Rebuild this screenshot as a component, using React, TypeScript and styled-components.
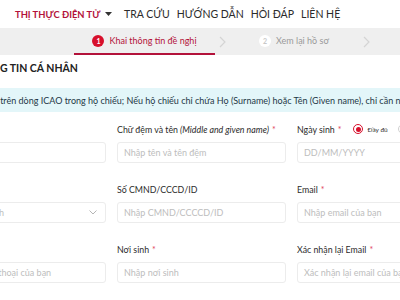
import styled, { createGlobalStyle } from "styled-components";

const GlobalStyle = createGlobalStyle`
  html, body {
    margin: 0;
    padding: 0;
    overflow: hidden;
    background: #ffffff;
    font-family: "Lato", "Noto Sans", sans-serif;
  }
`;

const RED = "#b3123a";

const navItems = ["TRA CỨU", "HƯỚNG DẪN", "HỎI ĐÁP", "LIÊN HỆ"];

type Field = {
  label: string;
  italic?: string;
  required?: boolean;
  placeholder: string;
  select?: boolean;
  radio?: boolean;
};

const rows: Field[][] = [
  [
    { label: "Họ", italic: "(Surname)", required: true, placeholder: "Nhập họ" },
    { label: "Chữ đệm và tên", italic: "(Middle and given name)", required: true, placeholder: "Nhập tên và tên đệm" },
    { label: "Ngày sinh", required: true, placeholder: "DD/MM/YYYY", radio: true },
  ],
  [
    { label: "Quốc tịch", required: true, placeholder: "Chọn quốc tịch", select: true },
    { label: "Số CMND/CCCD/ID", placeholder: "Nhập CMND/CCCCD/ID" },
    { label: "Email", required: true, placeholder: "Nhập email của bạn" },
  ],
  [
    { label: "Số điện thoại", required: true, placeholder: "Nhập số điện thoại của bạn" },
    { label: "Nơi sinh", required: true, placeholder: "Nhập nơi sinh" },
    { label: "Xác nhận lại Email", required: true, placeholder: "Xác nhận lại email của bạn" },
  ],
];

export default function App() {
  return (
    <Page>
      <GlobalStyle />
      <Header>
        <Brand>
          THỊ THỰC ĐIỆN TỬ
          <Caret />
        </Brand>
        {navItems.map((item) => (
          <NavLink key={item}>{item}</NavLink>
        ))}
      </Header>

      <Steps>
        <Step $active>
          <StepNum $active>1</StepNum>
          Khai thông tin đề nghị
        </Step>
        <Chevron />
        <Step>
          <StepNum>2</StepNum>
          Xem lại hồ sơ
        </Step>
        <Chevron />
      </Steps>

      <Content>
        <Title>THÔNG TIN CÁ NHÂN</Title>
        <Notice>
          Nhập Họ, chữ đệm và tên theo thứ tự trên dòng ICAO trong hộ chiếu; Nếu hộ chiếu chỉ chứa Họ (Surname) hoặc Tên (Given name), chỉ cần nhập một trường
        </Notice>
        <Grid>
          {rows.flat().map((f) => (
            <FieldBox key={f.label}>
              <LabelRow>
                <Label>
                  {f.label}
                  {f.italic && <em> {f.italic}</em>}
                  {f.required && <Star>*</Star>}
                </Label>
                {f.radio && (
                  <RadioGroup>
                    <Radio $checked />
                    <RadioText>Đầy đủ</RadioText>
                    <Radio />
                    <RadioText>Năm</RadioText>
                  </RadioGroup>
                )}
              </LabelRow>
              <InputBox>
                <Placeholder>{f.placeholder}</Placeholder>
                {f.select && <SelectArrow />}
              </InputBox>
            </FieldBox>
          ))}
        </Grid>
      </Content>
    </Page>
  );
}

const Caret = () => (
  <svg width="7" height="4" viewBox="0 0 7 4" style={{ marginLeft: 5 }}>
    <path d="M0 0 L7 0 L3.5 4 Z" fill="#333" />
  </svg>
);

const Chevron = () => (
  <ChevronWrap>
    <svg width="7" height="12" viewBox="0 0 7 12">
      <path d="M1 1 L6 6 L1 11" fill="none" stroke="#d4d4d4" strokeWidth="1.2" />
    </svg>
  </ChevronWrap>
);

const SelectArrow = () => (
  <svg width="8" height="5" viewBox="0 0 8 5">
    <path d="M0.5 0.5 L4 4 L7.5 0.5" fill="none" stroke="#b5b5b5" strokeWidth="1" />
  </svg>
);

const Page = styled.div`
  width: 400px;
  height: 300px;
  overflow: hidden;
  color: #2b2b2b;
`;

const Header = styled.header`
  height: 28px;
  display: flex;
  align-items: center;
  padding-left: 15px;
  background: #fff;
  position: relative;
  z-index: 1;
`;

const Brand = styled.div`
  display: flex;
  align-items: center;
  color: ${RED};
  font-size: 9.4px;
  font-weight: 700;
  width: 109px;
  white-space: nowrap;
`;

const NavLink = styled.a`
  color: #2b2b2b;
  font-size: 10.5px;
  white-space: nowrap;
  margin-right: 7px;
`;

const Steps = styled.div`
  height: 27px;
  background: #efefef;
  display: flex;
  align-items: stretch;
  padding-left: 74px;
`;

const Step = styled.div<{ $active?: boolean }>`
  width: ${(p) => (p.$active ? "141px" : "130px")};
  display: flex;
  align-items: center;
  justify-content: center;
  gap: 5px;
  font-size: 9px;
  color: ${(p) => (p.$active ? RED : "#9a9a9a")};
  border-bottom: 2px solid ${(p) => (p.$active ? RED : "transparent")};
  box-sizing: border-box;
  white-space: nowrap;
`;

const StepNum = styled.span<{ $active?: boolean }>`
  width: 12px;
  height: 12px;
  border-radius: 50%;
  background: ${(p) => (p.$active ? "#d7102c" : "#fff")};
  color: ${(p) => (p.$active ? "#fff" : "#c8c8c8")};
  font-size: 7px;
  font-weight: 700;
  display: flex;
  align-items: center;
  justify-content: center;
`;

const ChevronWrap = styled.div`
  width: 14px;
  display: flex;
  align-items: center;
  justify-content: center;
`;

const Content = styled.main`
  margin-left: -63px;
  width: 540px;
`;

const Title = styled.h2`
  margin: 0 0 13px;
  padding: 6px 0 0 32px;
  line-height: 14px;
  font-size: 10.5px;
  font-weight: 700;
  color: #222;
  white-space: nowrap;
`;

const Notice = styled.div`
  height: 24px;
  background: #e3f6f9;
  font-size: 9px;
  color: #243746;
  display: flex;
  align-items: center;
  text-indent: -87px;
  white-space: nowrap;
  overflow: hidden;
`;

const Grid = styled.div`
  display: grid;
  grid-template-columns: repeat(3, 169px);
  column-gap: 11px;
  row-gap: 19px;
  padding-top: 10px;
`;

const FieldBox = styled.div`
  display: flex;
  flex-direction: column;
  gap: 6px;
`;

const LabelRow = styled.div`
  height: 14px;
  display: flex;
  align-items: center;
  gap: 12px;
`;

const Label = styled.label`
  font-size: 8.8px;
  color: #2b2b2b;
  white-space: nowrap;
  em {
    font-style: italic;
  }
`;

const Star = styled.span`
  color: #e0455e;
  margin-left: 3px;
`;

const RadioGroup = styled.div`
  display: flex;
  align-items: center;
  gap: 4px;
`;

const Radio = styled.span<{ $checked?: boolean }>`
  width: 10px;
  height: 10px;
  border-radius: 50%;
  border: 1px solid ${(p) => (p.$checked ? "#d7102c" : "#cfcfcf")};
  box-sizing: border-box;
  display: flex;
  align-items: center;
  justify-content: center;
  &::after {
    content: "";
    width: 5px;
    height: 5px;
    border-radius: 50%;
    background: ${(p) => (p.$checked ? "#d7102c" : "transparent")};
  }
`;

const RadioText = styled.span`
  font-size: 6.5px;
  color: #333;
  margin-right: 6px;
`;

const InputBox = styled.div`
  box-sizing: border-box;
  height: 21px;
  border: 1px solid #ececec;
  border-radius: 3px;
  display: flex;
  align-items: center;
  justify-content: space-between;
  padding: 0 8px 0 6px;
`;

const Placeholder = styled.span`
  font-size: 9px;
  color: #bdbdbd;
  white-space: nowrap;
`;
